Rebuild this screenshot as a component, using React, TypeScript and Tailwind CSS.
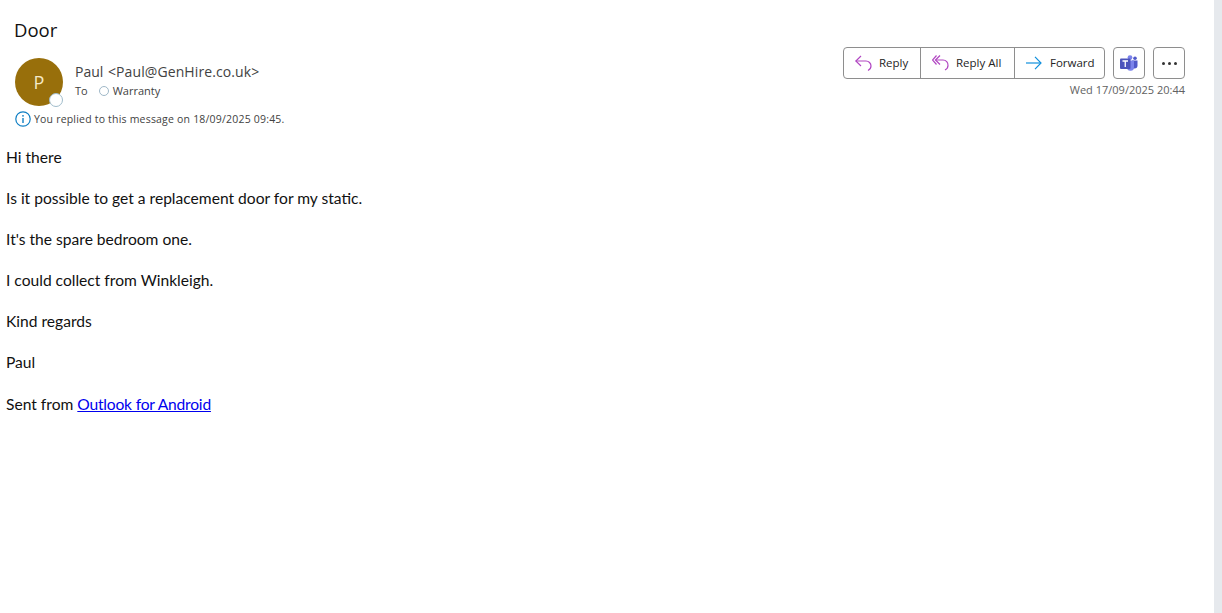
function ReplyIcon() {
  return (
    <svg width="18" height="18" viewBox="0 0 18 18" fill="none" stroke="#b146c2" strokeWidth="1.2">
      <path d="M6 2 .8 7l5.200 5" />
      <path d="M.8 7h10.200a5 5 0 0 1 5 5c0 2-1 3.500-3 4.500" />
    </svg>
  );
}

function ReplyAllIcon() {
  return (
    <svg width="18" height="18" viewBox="0 0 18 18" fill="none" stroke="#b146c2" strokeWidth="1.2">
      <path d="M4.500 1.500.5 6l4 4.500" />
      <path d="M8 1.500 3.500 6 8 10.500" />
      <path d="M3.500 6h7.500a5 5 0 0 1 5 5.500c0 2-1 3.500-3 4.500" />
    </svg>
  );
}

function ForwardIcon() {
  return (
    <svg width="18" height="18" viewBox="0 0 18 18" fill="none" stroke="#0f8fdc" strokeWidth="1.2">
      <path d="M0 9h14.500" />
      <path d="M9 2.800 15 9l-6 6.200" />
    </svg>
  );
}

function TeamsIcon() {
  return (
    <svg width="18" height="16" viewBox="0 0 18 16">
      <circle cx="10" cy="2.600" r="2.400" fill="#7b83eb" />
      <circle cx="15" cy="3.300" r="1.800" fill="#5059c9" />
      <path d="M12 5.500h5.500v5a3 3 0 0 1-3 3H12z" fill="#5059c9" />
      <path d="M6 5.500h8v6.500a3.500 3.500 0 0 1-7 .5z" fill="#7b83eb" />
      <rect x="0" y="3.500" width="10.500" height="10.500" rx="1" fill="#4b53bc" />
      <path d="M2.500 6h5.500M5.250 6v6" stroke="#fff" strokeWidth="1.300" fill="none" />
    </svg>
  );
}

function InfoIcon() {
  return (
    <svg width="16" height="16" viewBox="0 0 16 16" fill="none">
      <circle cx="8" cy="8" r="7.200" stroke="#0f7fc4" strokeWidth="1.200" />
      <circle cx="8" cy="4.800" r="0.900" fill="#0f7fc4" />
      <path d="M8 7v5" stroke="#0f7fc4" strokeWidth="1.400" />
    </svg>
  );
}

const ACTIONS = [
  { label: 'Reply', icon: <ReplyIcon />, width: 'w-[76px]', divider: '' },
  { label: 'Reply All', icon: <ReplyAllIcon />, width: 'w-[94px]', divider: 'border-l border-[#8e8e8e]' },
  { label: 'Forward', icon: <ForwardIcon />, width: 'w-[90px]', divider: 'border-l border-[#8e8e8e]' },
];

const PARAGRAPHS = [
  'Hi there',
  'Is it possible to get a replacement door for my static.',
  "It's the spare bedroom one.",
  'I could collect from Winkleigh.',
  'Kind regards',
  'Paul',
];

export default function App() {
  return (
    <div className="flex h-[613px] w-[1222px] overflow-hidden bg-white font-['Open_Sans',sans-serif]">
      <main className="w-[1214px]">
        <h1 className="pl-[14px] pt-[16px] text-[18.500px] leading-[28px] text-[#111]">Door</h1>

        <div className="flex justify-between pl-[15px] pr-[29px]">
          <div>
            <div className="mt-[14px] flex">
              <div className="relative flex h-[48px] w-[48px] items-center justify-center rounded-full bg-[#986f0b] text-[18px] text-[#f5e9c8]">
                P
                <span className="absolute bottom-[-1px] right-0 h-[14px] w-[14px] rounded-full border-[1.500px] border-[#a0bccb] bg-white" />
              </div>
              <div className="ml-[12px] pt-[5px]">
                <p className="text-[14px] leading-[18px] text-[#424242]">
                  Paul <span className="ml-[1px] tracking-[0.1px]">&lt;Paul@GenHire.co.uk&gt;</span>
                </p>
                <div className="mt-[2px] flex items-center text-[11px] leading-[16px] text-[#424242]">
                  <span>To</span>
                  <span className="ml-[11px] mr-[4px] h-[10px] w-[10px] rounded-full border border-[#9fb8c8]" />
                  <span>Warranty</span>
                </div>
              </div>
            </div>
            <div className="mt-[5px] flex items-center text-[10.500px] leading-[16px] tracking-[0.2px] text-[#424242]">
              <InfoIcon />
              <span className="ml-[3px]">You replied to this message on 18/09/2025 09:45.</span>
            </div>
          </div>

          <div className="mt-[3px] flex flex-col items-end">
            <div className="flex">
              <div className="flex h-[32px] rounded-[4px] border border-[#8e8e8e]">
                {ACTIONS.map((a) => (
                  <div
                    key={a.label}
                    className={`flex items-center gap-[6px] pl-[11px] text-[11.500px] text-[#242424] ${a.width} ${a.divider}`}
                  >
                    {a.icon}
                    <span>{a.label}</span>
                  </div>
                ))}
              </div>
              <div className="ml-[8px] flex h-[32px] w-[32px] items-center justify-center rounded-[4px] border border-[#8e8e8e]">
                <TeamsIcon />
              </div>
              <div className="ml-[8px] flex h-[32px] w-[32px] items-center justify-center gap-[3px] rounded-[4px] border border-[#8e8e8e]">
                <span className="h-[3px] w-[3px] rounded-full bg-[#333]" />
                <span className="h-[3px] w-[3px] rounded-full bg-[#333]" />
                <span className="h-[3px] w-[3px] rounded-full bg-[#333]" />
              </div>
            </div>
            <p className="mt-[3px] text-[11px] leading-[16px] text-[#616161]">Wed 17/09/2025 20:44</p>
          </div>
        </div>

        <div className="mt-[19px] pl-[6px] font-['Lato',sans-serif] text-[15.600px] leading-[22px] text-[#111]">
          {PARAGRAPHS.map((p) => (
            <p key={p} className="mb-[19.100px]">{p}</p>
          ))}
          <p>
            Sent from <a href="#" className="tracking-[-0.2px] text-[#0000ee] underline">Outlook for Android</a>
          </p>
        </div>
      </main>
      <div className="w-[8px] bg-[#e6e9ed]" />
    </div>
  );
}
